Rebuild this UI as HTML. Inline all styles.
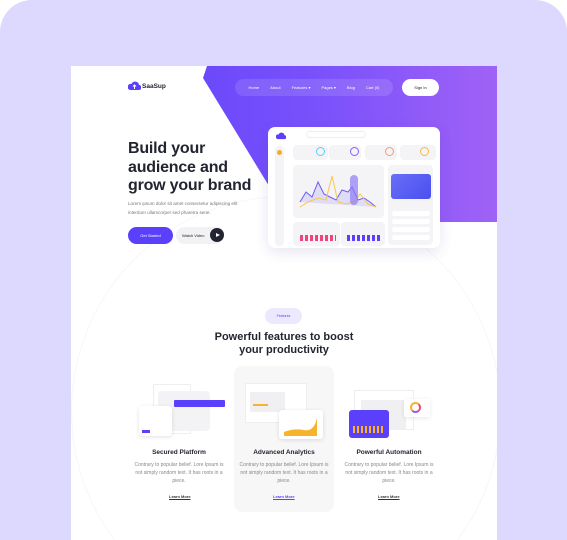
<!DOCTYPE html><html><head><style>
*{margin:0;padding:0;box-sizing:border-box}
html,body{width:567px;height:540px;overflow:hidden}
body{background:#fff;font-family:"Liberation Sans",sans-serif;position:relative}
.a{position:absolute}
.bg{left:0;top:0;width:567px;height:540px;background:#ddd8fd;border-radius:32px 32px 0 0}
.card{left:71px;top:66px;width:426px;height:474px;background:#fff;overflow:hidden}
.purple{left:0;top:0;width:426px;height:156px;background:linear-gradient(90deg,#5a3ffb,#7b52fb 60%,#a062f6);clip-path:polygon(136px 0,426px 0,426px 156px,220px 156px,132px 12px)}
.t{color:#222530;font-weight:bold}
.nav{left:164px;top:13px;width:158px;height:17px;border-radius:9px;background:rgba(255,255,255,.12);font-size:4px;color:#fff;display:flex;justify-content:space-around;align-items:center;padding:0 8px}
.box{background:#f4f4f6;border-radius:4px}
.g{font-size:5px;color:#888;line-height:8px;text-align:center}
.lm{font-size:4px;font-weight:bold;text-decoration:underline;color:#333}
</style></head><body>
<div class="a bg"></div>
<div class="a card">
<div class="a purple"></div>
<div class="a" style="left:0;top:130px;width:430px;height:430px;border-radius:50%;border:1px solid #f7f7f9"></div>
<svg class="a" style="left:57px;top:15px" width="13" height="10" viewBox="0 0 13 10"><path d="M2 9h9a2.5 2.5 0 0 0 0-5 4 4 0 0 0-7.6-1A3 3 0 0 0 2 9z" fill="#5a3ffb"/><path d="M6.5 8V4M5 5.5l1.5-1.5 1.5 1.5" stroke="#fff" stroke-width="1" fill="none"/></svg>
<div class="a t" style="left:71px;top:17px;font-size:6.5px">SaaSup</div>
<div class="a nav"><span>Home</span><span>About</span><span>Features ▾</span><span>Pages ▾</span><span>Blog</span><span>Cart (0)</span></div>
<div class="a" style="left:331px;top:13px;width:37px;height:17px;border-radius:9px;background:#fff;font-size:4px;color:#222;text-align:center;line-height:17px">Sign In</div>
<div class="a t" style="left:57px;top:74px;font-size:16px;line-height:18.5px;letter-spacing:-0.2px">Build your<br>audience and<br>grow your brand</div>
<div class="a" style="left:57px;top:133px;font-size:4.6px;line-height:9px;color:#777">Lorem ipsum dolor sit amet consectetur adipiscing elit<br>interdum ullamcorper sed pharetra sene.</div>
<div class="a" style="left:57px;top:161px;width:45px;height:17px;border-radius:9px;background:#5a3ffb;color:#fff;font-size:4px;text-align:center;line-height:17px">Get Started</div>
<div class="a" style="left:105px;top:161px;width:48px;height:17px;border-radius:9px;background:#f2f2f4;font-size:4px;color:#222;line-height:17px;padding-left:6px">Watch Video</div>
<div class="a" style="left:139px;top:162px;width:14px;height:14px;border-radius:50%;background:#222530"></div>
<div class="a" style="left:145px;top:166.5px;width:0;height:0;border-left:4px solid #fff;border-top:2.5px solid transparent;border-bottom:2.5px solid transparent"></div>
<div class="a" style="left:197px;top:61px;width:172px;height:121px;background:#fff;border-radius:7px;box-shadow:0 4px 14px rgba(60,40,140,.12)">
<svg class="a" style="left:8px;top:5px" width="10" height="8" viewBox="0 0 13 10"><path d="M2 9h9a2.5 2.5 0 0 0 0-5 4 4 0 0 0-7.6-1A3 3 0 0 0 2 9z" fill="#5a3ffb"/></svg>
<div class="a" style="left:38px;top:4px;width:60px;height:7px;border-radius:4px;border:1px solid #eee"></div>
<div class="a box" style="left:7px;top:19px;width:9px;height:100px"></div>
<div class="a" style="left:9px;top:23px;width:5px;height:5px;border-radius:50%;background:#f7a928"></div>
<div class="a box" style="left:25px;top:18px;width:35px;height:15px"></div><div class="a" style="left:48px;top:20px;width:9px;height:9px;border-radius:50%;border:1.5px solid #5ad0f5"></div>
<div class="a box" style="left:61px;top:18px;width:32px;height:15px"></div><div class="a" style="left:82px;top:20px;width:9px;height:9px;border-radius:50%;border:1.5px solid #8a5ef7"></div>
<div class="a box" style="left:97px;top:18px;width:32px;height:15px"></div><div class="a" style="left:117px;top:20px;width:9px;height:9px;border-radius:50%;border:1.5px solid #f59a6e"></div>
<div class="a box" style="left:132px;top:18px;width:36px;height:15px"></div><div class="a" style="left:152px;top:20px;width:9px;height:9px;border-radius:50%;border:1.5px solid #f7b84b"></div>
<div class="a box" style="left:25px;top:38px;width:91px;height:53px"></div>
<svg class="a" style="left:30px;top:45px" width="82" height="38"><path d="M2 30 8 20 14 25 20 10 26 22 32 25 38 28 44 18 50 20 54 15 60 28 66 26 72 30 78 35" stroke="#6d5cf2" fill="rgba(110,90,240,.15)" stroke-width="1"/><path d="M2 35 10 30 20 26 28 28 34 4 40 30 48 32 56 30 62 22 70 32 78 35" stroke="#f7c84b" fill="none" stroke-width="1"/><rect x="52" y="3" width="8" height="30" rx="4" fill="#8f7af7" opacity=".7"/></svg>
<div class="a box" style="left:120px;top:38px;width:45px;height:80px"></div>
<div class="a" style="left:123px;top:47px;width:40px;height:25px;border-radius:3px;background:linear-gradient(135deg,#6a6ef7,#4a4ff0)"></div>
<div class="a" style="left:124px;top:84px;width:38px;height:5px;border-radius:3px;background:#fff"></div>
<div class="a" style="left:124px;top:92px;width:38px;height:5px;border-radius:3px;background:#fff"></div>
<div class="a" style="left:124px;top:100px;width:38px;height:5px;border-radius:3px;background:#fff"></div>
<div class="a" style="left:124px;top:108px;width:38px;height:5px;border-radius:3px;background:#fff"></div>
<div class="a box" style="left:25px;top:95px;width:47px;height:24px"></div>
<div class="a" style="left:32px;top:108px;width:36px;height:6px;background:repeating-linear-gradient(90deg,#f0457a 0 3px,transparent 3px 5px)"></div>
<div class="a box" style="left:73px;top:95px;width:44px;height:24px"></div>
<div class="a" style="left:79px;top:108px;width:34px;height:6px;background:repeating-linear-gradient(90deg,#5a3ffb 0 3px,transparent 3px 5px)"></div>
</div>
<div class="a" style="left:194px;top:242px;width:37px;height:16px;border-radius:8px;background:#ece8fe;color:#5a3ffb;font-size:3.5px;text-align:center;line-height:16px">Features</div>
<div class="a t" style="left:93px;top:265px;width:240px;text-align:center;font-size:11px;line-height:13px">Powerful features to boost<br>your productivity</div>
<div class="a" style="left:163px;top:300px;width:100px;height:146px;border-radius:8px;background:#f7f7f8"></div>
<div class="a" style="left:82px;top:318px;width:38px;height:50px;border:1px solid #eee;background:#fff"></div>
<div class="a box" style="left:87px;top:325px;width:52px;height:40px;background:#f3f3f5"></div>
<div class="a" style="left:103px;top:334px;width:51px;height:7px;border-radius:1px;background:#5a3ffb"></div>
<div class="a" style="left:68px;top:340px;width:33px;height:30px;border-radius:3px;background:#fff;box-shadow:0 1px 4px rgba(0,0,0,.12)"></div>
<div class="a" style="left:71px;top:364px;width:8px;height:3px;background:#5a3ffb"></div>
<div class="a" style="left:174px;top:317px;width:62px;height:40px;background:#fff;border:1px solid #eee"></div>
<div class="a" style="left:179px;top:326px;width:35px;height:20px;background:#f0f0f2"></div>
<div class="a" style="left:182px;top:338px;width:15px;height:1.5px;background:#f7b32b"></div>
<div class="a" style="left:208px;top:344px;width:44px;height:29px;border-radius:3px;background:#fff;box-shadow:0 1px 5px rgba(0,0,0,.12)"></div>
<svg class="a" style="left:213px;top:350px" width="35" height="20"><path d="M0 20 L0 16 Q10 12 20 14 T33 2 L33 20Z" fill="#f7b32b"/></svg>
<div class="a" style="left:283px;top:324px;width:60px;height:40px;background:#fff;border:1px solid #eee"></div>
<div class="a" style="left:290px;top:334px;width:45px;height:30px;background:#f0f0f2"></div>
<div class="a" style="left:278px;top:344px;width:40px;height:28px;border-radius:3px;background:#5a3ffb"></div>
<div class="a" style="left:282px;top:360px;width:32px;height:7px;background:repeating-linear-gradient(90deg,#f7b32b 0 2px,transparent 2px 4px)"></div>
<div class="a" style="left:333px;top:333px;width:26px;height:18px;background:#fff;border-radius:2px;box-shadow:0 1px 4px rgba(0,0,0,.1)"></div>
<div class="a" style="left:339px;top:336px;width:11px;height:11px;border-radius:50%;border:2.5px solid #f7b32b;border-right-color:#f0457a;border-bottom-color:#8a5ef7"></div>
<div class="a t" style="left:63px;top:383px;width:90px;text-align:center;font-size:6.5px">Secured Platform</div>
<div class="a t" style="left:168px;top:383px;width:90px;text-align:center;font-size:6.5px">Advanced Analytics</div>
<div class="a t" style="left:273px;top:383px;width:90px;text-align:center;font-size:6.5px">Powerful Automation</div>
<div class="a g" style="left:63px;top:395px;width:90px">Contrary to popular belief. Lore Ipsum is not simply random text. It has roots in a piece.</div>
<div class="a g" style="left:168px;top:395px;width:90px">Contrary to popular belief. Lore Ipsum is not simply random text. It has roots in a piece.</div>
<div class="a g" style="left:273px;top:395px;width:90px">Contrary to popular belief. Lore Ipsum is not simply random text. It has roots in a piece.</div>
<div class="a lm" style="left:98px;top:428px">Learn More</div>
<div class="a lm" style="left:202px;top:428px;color:#5a3ffb">Learn More</div>
<div class="a lm" style="left:307px;top:428px">Learn More</div>
</div>
</body></html>
